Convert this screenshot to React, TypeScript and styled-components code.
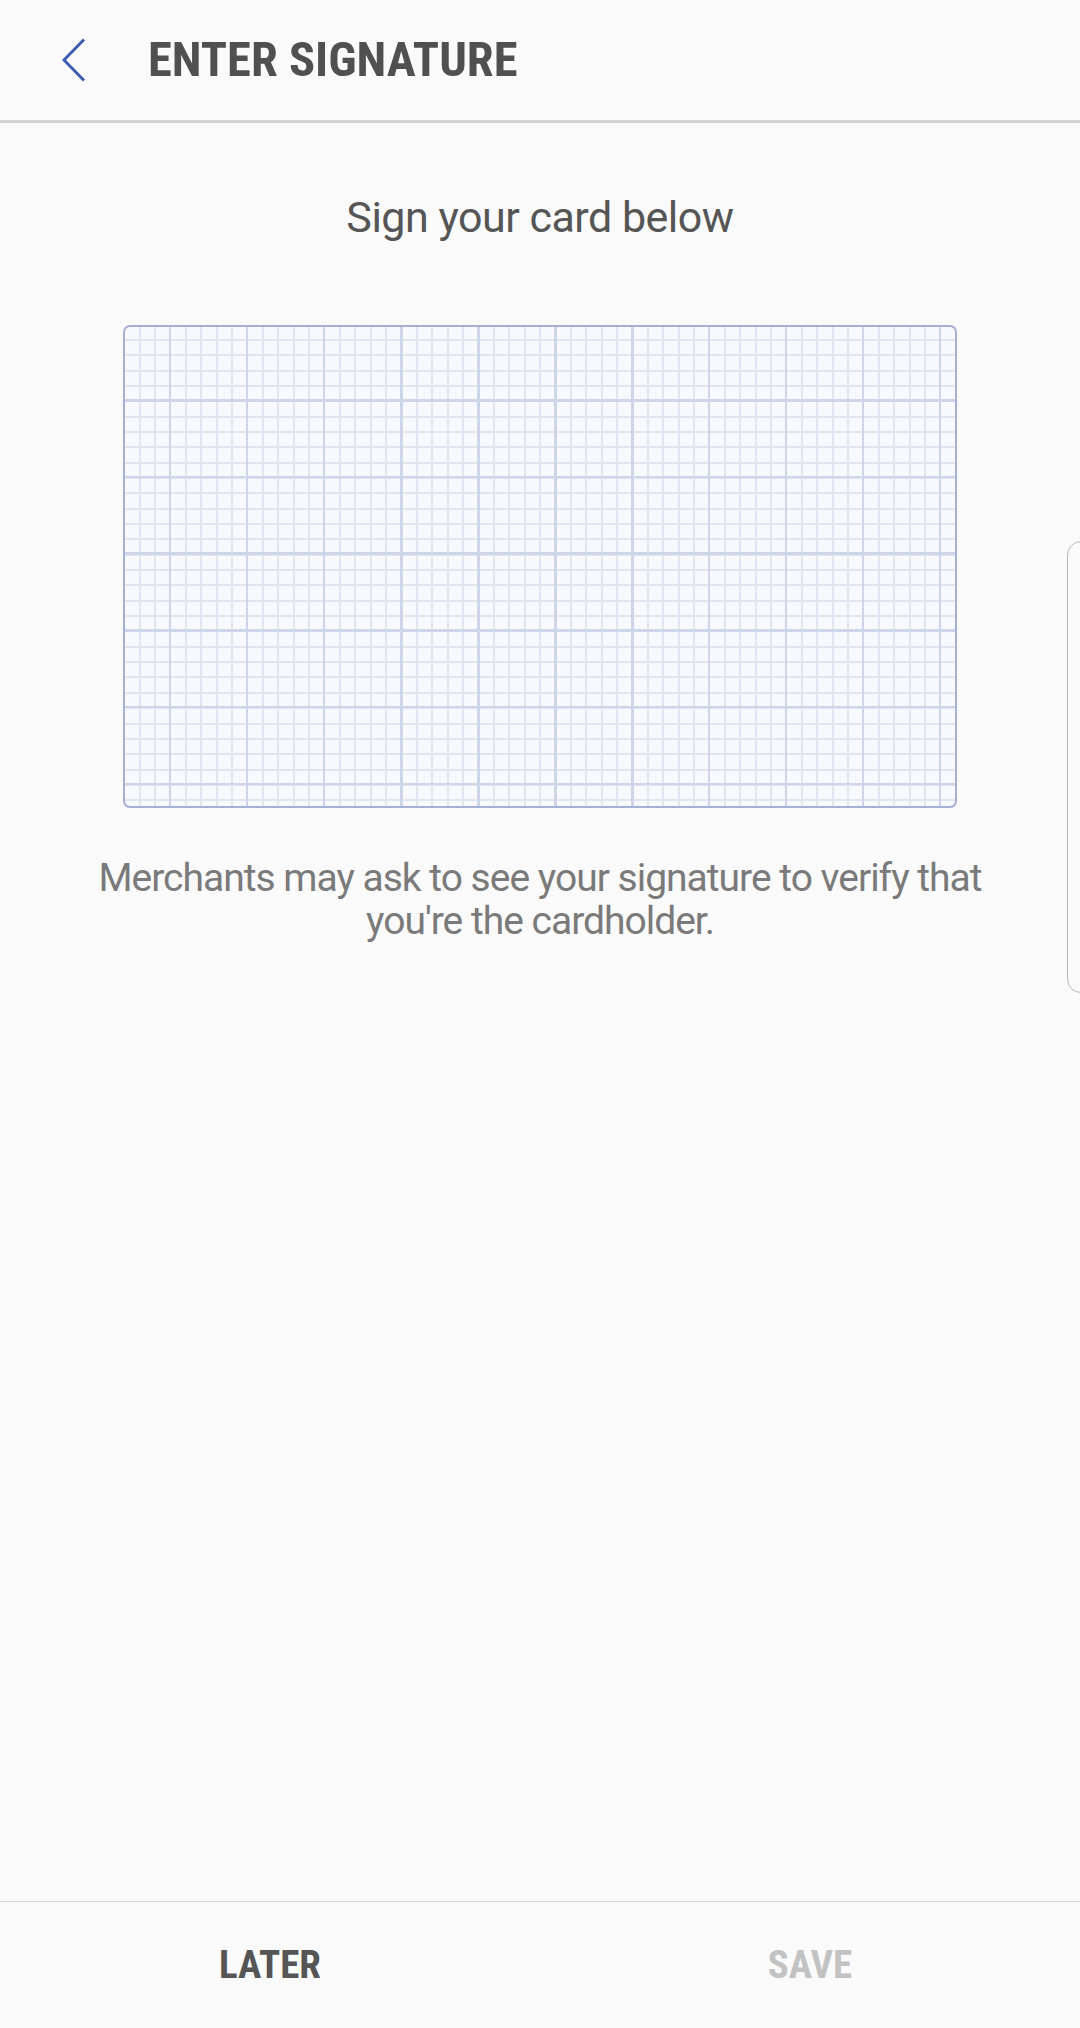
import styled, { createGlobalStyle } from "styled-components";

const GlobalStyle = createGlobalStyle`
  html, body {
    margin: 0;
    padding: 0;
    background: #fafafa;
  }
  body {
    font-family: Roboto, "Liberation Sans", sans-serif;
  }
`;

const Screen = styled.div`
  position: relative;
  width: 1080px;
  height: 2028px;
  display: flex;
  flex-direction: column;
  background: #fafafa;
  overflow: hidden;
`;

const Header = styled.header`
  height: 120px;
  display: flex;
  align-items: center;
  padding-left: 62px;
  border-bottom: 3px solid #d2d2d2;
  flex-shrink: 0;
`;

const BackButton = styled.button`
  border: none;
  background: none;
  padding: 0;
  width: 24px;
  height: 44px;
  display: flex;
  align-items: center;
  cursor: pointer;
  margin-right: 62px;
`;

const Title = styled.h1`
  margin: 0;
  font-family: "Roboto Condensed", "Liberation Sans Narrow", "DejaVu Sans Condensed", Roboto, sans-serif;
  font-stretch: condensed;
  font-weight: 700;
  font-size: 48.5px;
  line-height: 60px;
  color: #505050;
`;

const Content = styled.main`
  flex: 1;
  display: flex;
  flex-direction: column;
  align-items: center;
`;

const Prompt = styled.p`
  margin: 69px 0 0;
  font-size: 43px;
  line-height: 50px;
  letter-spacing: -0.5px;
  color: #555555;
  font-weight: 400;
`;

// 서명 영역 - 모눈종이 배경 (타일 이음새 안 생기게 no-repeat 큰 이미지로)
const SignPad = styled.div`
  margin-top: 83px;
  width: 834px;
  height: 483px;
  box-sizing: border-box;
  border: 2.5px solid #a6b0d6;
  border-radius: 7px;
  background-color: #f8f9fc;
  background-image:
    repeating-linear-gradient(to right, #cfd5e9 0 2.5px, transparent 2.5px 77px),
    repeating-linear-gradient(to bottom, #cfd5e9 0 2.5px, transparent 2.5px 76.7px),
    repeating-linear-gradient(to right, #e1e5ef 0 2px, transparent 2px 15.4px),
    repeating-linear-gradient(to bottom, #e1e5ef 0 2px, transparent 2px 15.34px);
  background-repeat: no-repeat;
  background-size: 1000px 600px;
  background-position: -33px 0, 0 -4.7px, -1.8px 0, 0 -3.34px;
`;

const Notice = styled.p`
  margin: 49px 0 0;
  width: 920px;
  text-align: center;
  font-size: 39px;
  line-height: 43px;
  letter-spacing: -1px;
  color: #7a7a7a;
`;

const Footer = styled.footer`
  height: 126px;
  border-top: 1.5px solid #d6d6d6;
  display: grid;
  grid-template-columns: 1fr 1fr;
  flex-shrink: 0;
`;

const FooterButton = styled.button<{ disabled?: boolean }>`
  border: none;
  background: none;
  font-family: "Roboto Condensed", "Liberation Sans Narrow", "DejaVu Sans Condensed", Roboto, sans-serif;
  font-stretch: condensed;
  font-weight: 700;
  font-size: 39px;
  color: ${(props) => (props.disabled ? "#c2c2c2" : "#555555")};
  cursor: ${(props) => (props.disabled ? "default" : "pointer")};
`;

// 오른쪽 엣지 패널 핸들
const EdgeHandle = styled.div`
  position: absolute;
  top: 541px;
  left: 1067px;
  width: 40px;
  height: 452px;
  box-sizing: border-box;
  border: 1.5px solid #b8b8b8;
  border-radius: 14px;
`;

const App = () => {
  return (
    <>
      <GlobalStyle />
      <Screen>
        <Header>
          <BackButton aria-label="back">
            <svg width="24" height="44" viewBox="0 0 24 44">
              <polyline points="22,1.5 2,22 22,42.5" fill="none" stroke="#3d5cb3" strokeWidth="3" />
            </svg>
          </BackButton>
          <Title>ENTER SIGNATURE</Title>
        </Header>
        <Content>
          <Prompt>Sign your card below</Prompt>
          <SignPad />
          <Notice>Merchants may ask to see your signature to verify that you're the cardholder.</Notice>
        </Content>
        <Footer>
          <FooterButton>LATER</FooterButton>
          <FooterButton disabled>SAVE</FooterButton>
        </Footer>
        <EdgeHandle />
      </Screen>
    </>
  );
};

export default App;
